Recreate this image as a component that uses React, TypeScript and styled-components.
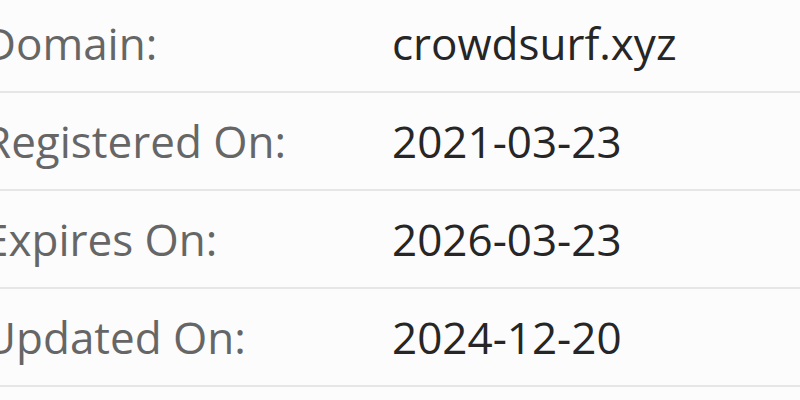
import * as React from 'react';
import styled, { createGlobalStyle } from 'styled-components';

const GlobalStyle = createGlobalStyle`
  html, body {
    margin: 0;
    padding: 0;
    background: #fcfcfc;
    overflow: hidden;
  }
`;

const details = [
  { label: 'Domain:', value: 'crowdsurf.xyz' },
  { label: 'Registered On:', value: '2021-03-23' },
  { label: 'Expires On:', value: '2026-03-23' },
  { label: 'Updated On:', value: '2024-12-20' },
];

const App: React.FC = () => {
  return (
    <>
      <GlobalStyle />
      <Table>
        {details.map((d) => (
          <Row key={d.label}>
            <Label>{d.label}</Label>
            <Value>{d.value}</Value>
          </Row>
        ))}
      </Table>
    </>
  );
};

const Table = styled.div`
  display: flex;
  flex-direction: column;
  margin: -5px 0 0 -16px;
  width: 830px;
  font-family: "Open Sans", "Liberation Sans", sans-serif;
  font-size: 44px;
`;

const Row = styled.div`
  display: grid;
  grid-template-columns: 408px 1fr;
  align-items: center;
  height: 96px;
  border-bottom: 2px solid #e6e6e6;
`;

const Label = styled.div`
  color: #666666;
`;

const Value = styled.div`
  color: #262626;
`;

export default App;
